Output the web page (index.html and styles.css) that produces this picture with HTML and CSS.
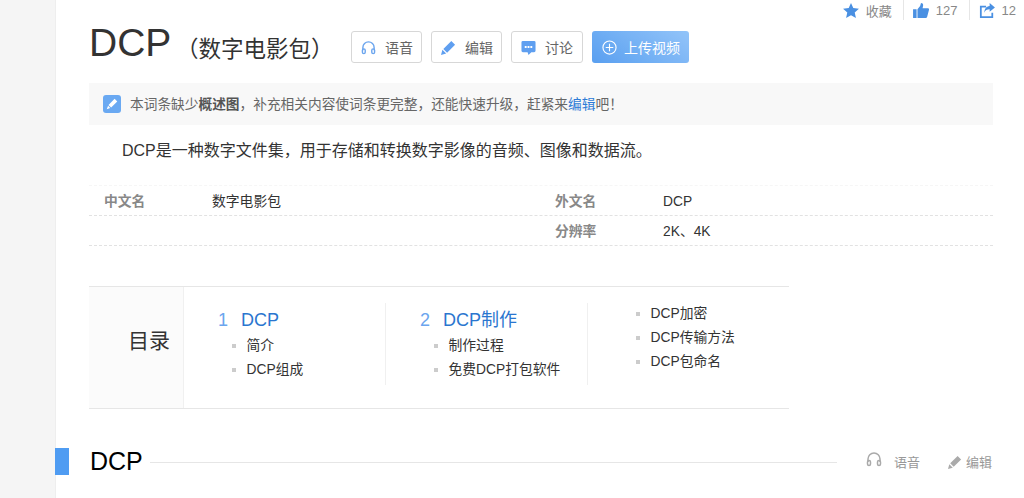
FILE: index.html
```html
<!DOCTYPE html>
<html lang="zh-CN">
<head>
	<meta charset="UTF-8">
	<title>DCP（数字电影包）</title>
	<link rel="stylesheet" href="styles.css">
</head>
<body>
<div class="main">
	<div class="stats">
		<span class="stat">
			<svg viewBox="0 0 18 17"><path d="M9 0l2.600 5.800 6.400.7-4.800 4.200 1.400 6.300L9 13.800 3.400 17l1.400-6.300L0 6.500l6.400-.7z"/></svg>
			<span>收藏</span>
		</span>
		<span class="stat">
			<svg viewBox="0 0 18 17"><path d="M0 7h4v10H0zM5 7l3-3.500L9 0c2 0 2.800 1.500 2.300 3.500L10.800 6H17c1 0 1.300 1 1 2l-2 7.500c-.3 1-1 1.500-2 1.500H5z"/></svg>
			<span>127</span>
		</span>
		<span class="stat stat-last">
			<svg viewBox="0 0 18 17"><path d="M1 3h7v2H3v10h11v-4h2v6H1z"/><path d="M12 0l6 5-6 5V7c-3 0-5 1-6 4 0-4 2-7 6-7.500z"/></svg>
			<span>12</span>
		</span>
	</div>
	<div class="title-row">
		<h1 class="title">DCP</h1>
		<h2 class="subtitle">（数字电影包）</h2>
		<a class="btn" href="#">
			<svg class="btn-ico" viewBox="0 0 16 16"><path class="line" d="M2 11V8a6 6 0 0 1 12 0v3"/><rect class="line" x="1.500" y="9.500" width="3" height="5" rx="1.500"/><rect class="line" x="11.500" y="9.500" width="3" height="5" rx="1.500"/></svg>
			语音
		</a>
		<a class="btn" href="#">
			<svg class="btn-ico" viewBox="0 0 16 16"><path class="solid" d="M11 1l4 4-8.500 8.500-4-4zM1.500 10.500l4 4L0 16z"/></svg>
			编辑
		</a>
		<a class="btn btn-talk" href="#">
			<svg class="btn-ico" viewBox="0 0 16 16"><path class="solid" d="M2 1h12a1.500 1.500 0 0 1 1.500 1.500v9A1.500 1.500 0 0 1 14 13h-3l-3 3-1-3H2a1.500 1.500 0 0 1-1.500-1.500v-9A1.500 1.500 0 0 1 2 1z"/><path class="dots" d="M4 6.500h2v2H4zM7 6.500h2v2H7zM10 6.500h2v2h-2z"/></svg>
			讨论
		</a>
		<a class="btn btn-upload" href="#">
			<svg class="btn-ico-lg" viewBox="0 0 16 16"><circle cx="8" cy="8" r="7"/><path d="M8 4v8M4 8h8"/></svg>
			上传视频
		</a>
	</div>
	<div class="notice">
		<span class="notice-ico"><svg viewBox="0 0 16 16"><path d="M11 2l3 3-7 7-3-3zM3.500 10l2.500 2.500L2 14z"/></svg></span>
		<span class="notice-text">本词条缺少<b>概述图</b>，补充相关内容使词条更完整，还能快速升级，赶紧来<a href="#">编辑</a>吧！</span>
	</div>
	<p class="summary">DCP是一种数字文件集，用于存储和转换数字影像的音频、图像和数据流。</p>
	<div class="info">
		<div class="info-row">
			<span class="info-k">中文名</span><span class="info-v">数字电影包</span>
			<span class="info-k">外文名</span><span class="info-v">DCP</span>
		</div>
		<div class="info-row">
			<span class="info-k"></span><span class="info-v"></span>
			<span class="info-k">分辨率</span><span class="info-v">2K、4K</span>
		</div>
	</div>
	<div class="toc">
		<div class="toc-head">目录</div>
		<div class="toc-col">
			<div class="toc-l1"><span class="toc-num">1</span><a href="#">DCP</a></div>
			<ul class="toc-list">
				<li>简介</li>
				<li>DCP组成</li>
			</ul>
		</div>
		<div class="toc-col">
			<div class="toc-l1"><span class="toc-num">2</span><a href="#">DCP制作</a></div>
			<ul class="toc-list">
				<li>制作过程</li>
				<li>免费DCP打包软件</li>
			</ul>
		</div>
		<div class="toc-col toc-col-last">
			<ul class="toc-list">
				<li>DCP加密</li>
				<li>DCP传输方法</li>
				<li>DCP包命名</li>
			</ul>
		</div>
	</div>
	<div class="sec">
		<span class="sec-mark"></span>
		<h2 class="sec-title">DCP</h2>
		<span class="sec-line"></span>
		<svg class="sec-phones" viewBox="0 0 16 16"><path class="line" d="M2 11V8a6 6 0 0 1 12 0v3"/><rect class="line" x="1.500" y="9.500" width="3" height="5" rx="1.500"/><rect class="line" x="11.500" y="9.500" width="3" height="5" rx="1.500"/></svg>
		<span class="sec-text sec-voice">语音</span>
		<svg class="sec-pen" viewBox="0 0 16 16"><path class="solid" d="M11 1l4 4-8.500 8.500-4-4zM1.500 10.500l4 4L0 16z"/></svg>
		<span class="sec-text">编辑</span>
	</div>
</div>
</body>
</html>
```

FILE: styles.css
```css
*{margin:0;padding:0;box-sizing:border-box;}
html,body{height:498px;overflow:hidden;}
body{background:#f5f5f5;font-family:"Liberation Sans","Noto Sans CJK SC",sans-serif;color:#333;font-size:14px;}
a{text-decoration:none;}
.main{margin-left:55px;height:498px;background:#fff;padding:0 31px 0 33px;border-left:1px solid #eee;}

/* stats */
.stats{display:flex;justify-content:flex-end;height:22px;margin-right:-31px;align-items:flex-start;}
.stat{display:flex;align-items:center;height:20px;padding:0 11px 0 9px;border-right:1px solid #e6e6e6;font-size:13px;color:#888;white-space:nowrap;}
.stat svg{width:16px;height:15px;fill:#4a90e2;margin-right:7px;}
.stat-last{border-right:0;padding-right:8px;}

/* title */
.title-row{display:flex;align-items:center;height:40px;}
.title{width:83px;flex:none;margin-top:2px;font-size:39px;font-weight:400;color:#333;line-height:44px;}
.subtitle{width:175px;flex:none;margin:9px 0 0 4px;font-size:22.5px;font-weight:400;color:#333;white-space:nowrap;}
.btn{display:flex;align-items:center;flex:none;width:71px;height:32px;margin:10px 9px 0 0;padding:0 9px;border:1px solid #d7d7d7;border-radius:3px;color:#666;font-size:14px;white-space:nowrap;}
.btn-talk{width:72px;}
.btn-ico{width:15px;height:15px;margin-right:9px;flex:none;}
.line{fill:none;stroke:#6ba5ee;stroke-width:1.500;}
.solid{fill:#5f9ff0;}
.dots{fill:#fff;}
.btn-upload{width:97px;margin-right:0;padding:0 10px;background:linear-gradient(35deg,#519bf0,#8dc1f9);border:0;color:#fff;opacity:.95;}
.btn-ico-lg{width:15px;height:15px;margin-right:7px;flex:none;fill:none;stroke:#fff;stroke-width:1.200;}

/* notice */
.notice{display:flex;align-items:center;height:42px;margin-top:21px;padding-left:14px;background:#f8f8f8;color:#666;font-size:13.7px;}
.notice-text{margin-bottom:2px;}
.notice b{font-weight:700;color:#555;}
.notice a{color:#2e7bd6;}
.notice-ico{display:flex;align-items:center;justify-content:center;width:18px;height:18px;margin:0 9px 1px 0;background:#6aa9f2;border-radius:3px;}
.notice-ico svg{width:14px;height:14px;fill:#fff;}

.summary{margin-top:14px;padding-left:33px;font-size:16px;line-height:24px;color:#333;}

/* info table */
.info{margin-top:22px;border-top:1px dashed #f6f6f6;font-size:13.8px;}
.info-row{display:flex;height:30px;align-items:center;border-bottom:1px dashed #e2e2e2;padding:3px 0 0 15px;line-height:20px;}
.info-k{width:108px;height:20px;flex:none;font-weight:700;color:#888;}
.info-v{width:343px;height:20px;flex:none;color:#333;}

/* toc */
.toc{display:flex;width:700px;height:123px;margin-top:40px;border-top:1px solid #e6e6e6;border-bottom:1px solid #e6e6e6;}
.toc-head{width:95px;flex:none;background:#fbfbfb;border-right:1px solid #f0f0f0;font-size:21px;text-align:right;padding:37px 13px 0 0;color:#333;}
.toc-col{width:202px;flex:none;height:82px;margin-top:16px;padding-left:34px;border-right:1px solid #f0f0f0;}
.toc-col-last{border-right:0;}
.toc-l1{display:flex;align-items:center;height:20px;margin-top:7px;font-size:18px;line-height:20px;}
.toc-num{width:23px;color:#6ba5ee;}
.toc-l1 a{color:#2a76cf;}
.toc-list{list-style:none;margin:4px 0 0 14px;}
.toc-list li{position:relative;height:24px;line-height:24px;padding-left:14.5px;font-size:13.8px;color:#333;}
.toc-list li::before{content:"";position:absolute;left:0;top:10px;width:4px;height:4px;background:#ccc;}
.toc-col-last .toc-list{margin-top:-1px;}

/* section head */
.sec{display:flex;align-items:center;height:27px;margin:39px 1px 0 -34px;}
.sec-mark{width:14px;height:27px;background:#4f9cf2;flex:none;}
.sec-title{width:52px;flex:none;font-size:25px;font-weight:400;color:#000;margin-left:21px;}
.sec-line{flex:1;height:1px;background:#e6e6e6;margin:1px 29px 0 8px;}
.sec-text{flex:none;color:#999;font-size:13px;white-space:nowrap;}
.sec-voice{margin:0 28px 0 12px;}
.sec-phones{width:16px;height:16px;flex:none;margin-bottom:6px;}
.sec-phones .line{stroke:#aaa;}
.sec-pen{width:14px;height:14px;flex:none;margin-right:4px;}
.sec-pen .solid{fill:#aaa;}
```
